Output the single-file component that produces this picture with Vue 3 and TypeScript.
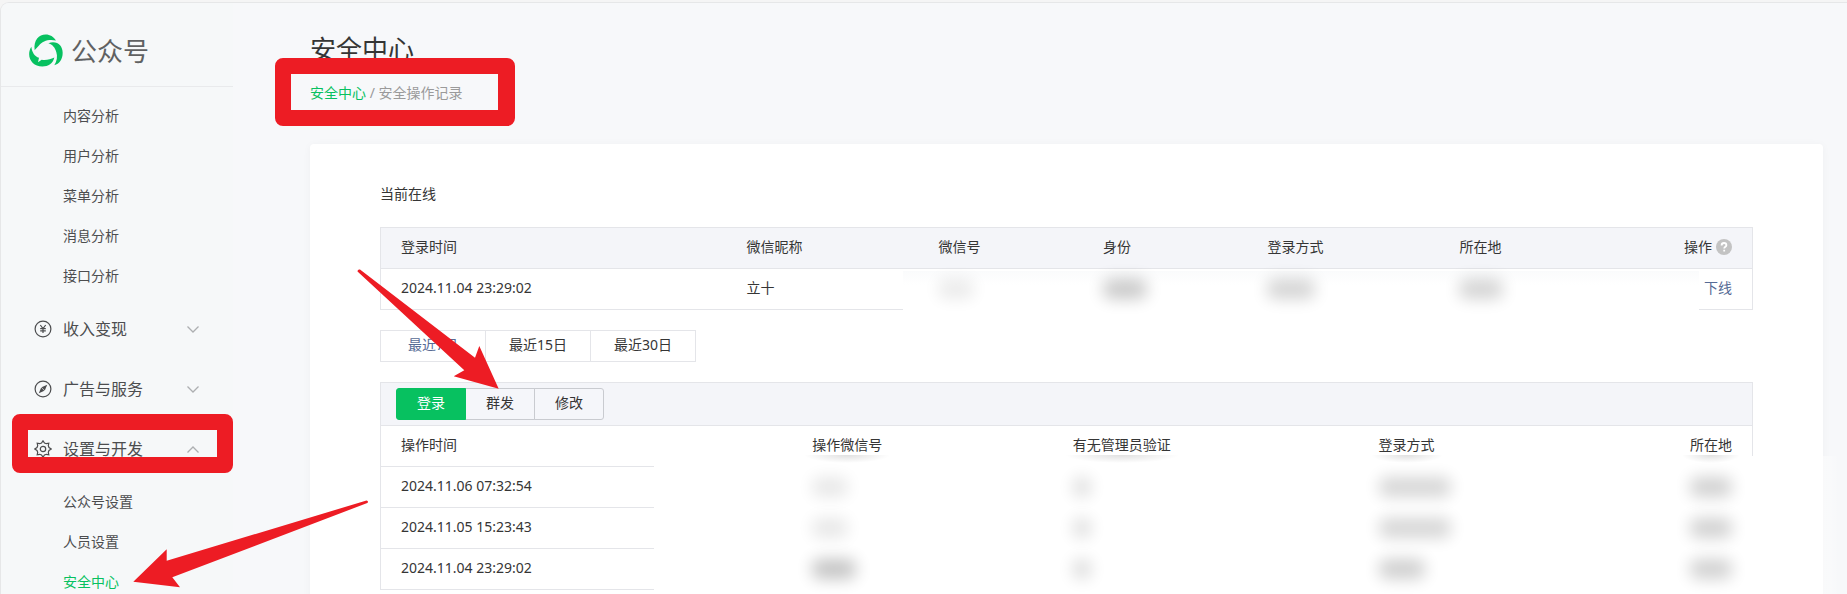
<script setup lang="ts">
interface Smudge { width: number; tone: number }

const analysis: string[] = ['内容分析', '用户分析', '菜单分析', '消息分析', '接口分析']
const settings: string[] = ['公众号设置', '人员设置', '安全中心']
const ranges: string[] = ['最近7日', '最近15日', '最近30日']
const kinds: string[] = ['登录', '群发', '修改']

const onlineMasks: Smudge[] = [
  { width: 36, tone: 0.08 },
  { width: 44, tone: 0.21 },
  { width: 48, tone: 0.17 },
  { width: 44, tone: 0.17 },
]

const records: { time: string; masks: Smudge[] }[] = [
  { time: '2024.11.06 07:32:54', masks: [{ width: 36, tone: 0.09 }, { width: 18, tone: 0.13 }, { width: 72, tone: 0.16 }, { width: 42, tone: 0.18 }] },
  { time: '2024.11.05 15:23:43', masks: [{ width: 36, tone: 0.09 }, { width: 18, tone: 0.13 }, { width: 72, tone: 0.16 }, { width: 42, tone: 0.18 }] },
  { time: '2024.11.04 23:29:02', masks: [{ width: 44, tone: 0.23 }, { width: 18, tone: 0.14 }, { width: 46, tone: 0.19 }, { width: 42, tone: 0.18 }] },
]

const maskStyle = (m: Smudge) => ({ width: `${m.width}px`, opacity: m.tone })
</script>

<template>
  <div class="page">
    <div class="frame">
      <aside class="sidebar">
        <header class="brand">
          <svg class="logo" viewBox="0 0 102 98" aria-hidden="true">
            <path d="M17 48C13 18 30 1 50 1c13 0 24 7 31 18C60 14 40 20 30 34 25 40 21 43 17 48z" />
            <path d="M58 27C84 18 101 34 101 56c0 20-10 34-25 37C84 80 86 66 82 54 78 40 70 30 58 27z" />
            <path d="M7 38C9 55 17 67 30 71L27 84l11-7c14 2 26-1 38-7C72 88 58 97 40 97 8 97-10 66 7 38z" />
          </svg>
          <span class="brand-name">公众号</span>
        </header>
        <nav>
          <ul class="sub">
            <li v-for="item in analysis" :key="item"><a href="#">{{ item }}</a></li>
          </ul>
          <button class="group" type="button" aria-expanded="false">
            <svg class="icon" viewBox="0 0 18 18" aria-hidden="true">
              <circle cx="9" cy="9" r="7.9" />
              <path d="M6.300 5l2.700 3.600L11.700 5M9 8.600V13M6.200 8.700h5.600M6.200 10.800h5.600" />
            </svg>
            <span>收入变现</span>
            <svg class="chevron" viewBox="0 0 12 7" aria-hidden="true"><path d="M.5.500L6 6l5.500-5.500" /></svg>
          </button>
          <button class="group" type="button" aria-expanded="false">
            <svg class="icon" viewBox="0 0 18 18" aria-hidden="true">
              <circle cx="9" cy="9" r="7.900" />
              <path class="solid" d="M13.200 4.800L10.800 10.400 7.600 7.200z" />
              <path class="solid" d="M4.800 13.200l2.400-5.600 3.200 3.200z" />
            </svg>
            <span>广告与服务</span>
            <svg class="chevron" viewBox="0 0 12 7" aria-hidden="true"><path d="M.5.500L6 6l5.500-5.500" /></svg>
          </button>
          <button class="group" type="button" aria-expanded="true">
            <svg class="icon" viewBox="0 0 18 18" aria-hidden="true">
              <circle cx="9" cy="9" r="2.700" />
              <path d="M9 .8l1.500 2.200 1.800.7 2.500-.5-.5 2.500.7 1.800L17.200 9 15 10.500l-.7 1.800.5 2.500-2.500-.5-1.800.7L9 17.200 7.500 15l-1.800-.7-2.500.5.500-2.500-.7-1.800L.8 9 3 7.500l.7-1.800-.5-2.500 2.500.5L7.500 3z" />
            </svg>
            <span>设置与开发</span>
            <svg class="chevron" viewBox="0 0 12 7" aria-hidden="true"><path d="M.5 6.500L6 1l5.500 5.500" /></svg>
          </button>
          <ul class="sub last">
            <li v-for="item in settings" :key="item">
              <a href="#" :class="{ active: item === '安全中心' }">{{ item }}</a>
            </li>
          </ul>
        </nav>
      </aside>

      <main class="main">
        <h1>安全中心</h1>
        <div class="crumbs"><a href="#">安全中心</a> / 安全操作记录</div>

        <section class="card">
          <h2>当前在线</h2>

          <div class="table-wrap">
            <table class="online">
              <colgroup>
                <col class="w-time" /><col class="w-14" /><col class="w-12" /><col class="w-12" /><col class="w-14" /><col class="w-12" /><col />
              </colgroup>
              <thead>
                <tr>
                  <th>登录时间</th><th>微信昵称</th><th>微信号</th><th>身份</th><th>登录方式</th><th>所在地</th>
                  <th class="end">
                    <span class="op">操作
                      <svg class="help" viewBox="0 0 16 16" role="img" aria-label="帮助">
                        <circle cx="8" cy="8" r="8" />
                        <path d="M5.600 6.400C5.600 4.800 6.600 4 8 4s2.400.9 2.400 2.200C10.400 7.700 8.200 7.800 8.200 9.600M8.200 10.800v1.700" />
                      </svg>
                    </span>
                  </th>
                </tr>
              </thead>
              <tbody>
                <tr>
                  <td>2024.11.04 23:29:02</td>
                  <td>立十</td>
                  <td v-for="(m, i) in onlineMasks" :key="i"><span class="smudge" :style="maskStyle(m)"></span></td>
                  <td class="end"><a href="#">下线</a></td>
                </tr>
              </tbody>
            </table>
            <div class="veil veil-online"></div>
          </div>

          <div class="ranges">
            <button v-for="(r, i) in ranges" :key="r" type="button" :class="{ current: i === 0 }">{{ r }}</button>
          </div>

          <div class="table-wrap">
            <div class="toolbar">
              <button v-for="(k, i) in kinds" :key="k" type="button" :class="{ on: i === 0 }">{{ k }}</button>
            </div>
            <table class="records">
              <colgroup>
                <col class="w-30" /><col class="w-19" /><col class="w-22" /><col class="w-14" /><col />
              </colgroup>
              <thead>
                <tr>
                  <th>操作时间</th>
                  <th><span class="smear">操作微信号</span></th>
                  <th><span class="smear">有无管理员验证</span></th>
                  <th><span class="smear">登录方式</span></th>
                  <th class="end"><span class="smear">所在地</span></th>
                </tr>
              </thead>
              <tbody>
                <tr v-for="r in records" :key="r.time">
                  <td>{{ r.time }}</td>
                  <td v-for="(m, i) in r.masks" :key="i" :class="{ end: i === 3 }">
                    <span class="smudge" :style="maskStyle(m)"></span>
                  </td>
                </tr>
              </tbody>
            </table>
            <div class="veil veil-records"></div>
          </div>
        </section>
      </main>
    </div>

    <svg class="marks" width="560" height="590" viewBox="0 0 560 590" aria-hidden="true">
      <path fill-rule="evenodd" d="M283 58H507a8 8 0 0 1 8 8V118a8 8 0 0 1-8 8H283a8 8 0 0 1-8-8V66a8 8 0 0 1 8-8zM291 74V110H498V74z" />
      <path fill-rule="evenodd" d="M20 414H225a8 8 0 0 1 8 8V465a8 8 0 0 1-8 8H20a8 8 0 0 1-8-8V422a8 8 0 0 1 8-8zM28 430V457H217V430z" />
      <path d="M357.500 271.500Q357.500 269 360 269.500L475 357.700 479.300 346 498.700 388.700 453.700 376.300 464.300 370.300z" />
      <path d="M366.500 500.500Q369 501 367.300 503L172.300 577.300 180 587.300 133.300 581.700 166.700 549.300V560.700z" />
    </svg>
  </div>
</template>

<style>
body {
  margin: 0;
}
</style>

<style scoped>
.page {
  position: relative;
  box-sizing: border-box;
  height: 100vh;
  padding-top: 2px;
  overflow: hidden;
  background: #f5f5f5;
  color: #353535;
  font: 14px/20px "Noto Sans", "Noto Sans CJK SC", sans-serif;
}

a {
  color: inherit;
  text-decoration: none;
}

button {
  margin: 0;
  color: inherit;
  font: inherit;
  cursor: pointer;
}

.frame {
  display: flex;
  box-sizing: border-box;
  height: 100%;
  border: 1px solid #e6e7e8;
  border-width: 1px 0 0 1px;
  border-radius: 9px 0 0 0;
  background: #f7f8fa;
}

.sidebar {
  flex: 0 0 232px;
  border-radius: 8px 0 0 0;
  background: #f6f8f9;
}

.brand {
  display: flex;
  align-items: center;
  box-sizing: border-box;
  height: 84px;
  padding: 12px 28px 0;
  gap: 8px;
  border-bottom: 1px solid #e9eaec;
}

.logo {
  width: 34px;
  height: 33px;
  fill: #07c160;
}

.brand-name {
  color: #606162;
  font-size: 26px;
  line-height: 36px;
}

.sub {
  margin: 0;
  padding: 9px 0 4px;
  list-style: none;
}

.sub.last {
  padding-top: 2px;
}

.sub a {
  display: block;
  padding-left: 62px;
  color: #4c4d4f;
  line-height: 40px;
}

.sub a.active {
  color: #07c160;
}

.group {
  display: flex;
  align-items: center;
  width: 100%;
  height: 60px;
  padding: 0 34px 2px 33px;
  gap: 11px;
  border: 0;
  background: none;
  color: #4c4d4f;
  font-size: 16px;
  text-align: left;
}

.icon {
  width: 18px;
  height: 18px;
  fill: none;
  stroke: #4c4d4f;
  stroke-width: 1.2;
}

.icon .solid {
  fill: #4c4d4f;
  stroke: none;
}

.chevron {
  width: 12px;
  height: 7px;
  margin-left: auto;
  overflow: visible;
  fill: none;
  stroke: #adafb1;
  stroke-width: 1.300;
}

.main {
  flex: 1;
  min-width: 0;
  padding: 28px 24px 0 77px;
}

h1 {
  margin: 0;
  font-size: 26px;
  font-weight: 400;
  line-height: 36px;
}

.crumbs {
  margin: 16px 0 41px;
  color: #9a9a9a;
}

.crumbs a {
  color: #07c160;
}

.card {
  padding: 40px 70px;
  border-radius: 4px;
  background: #fff;
  box-shadow: 0 1px 8px rgba(0, 0, 0, 0.04);
}

h2 {
  margin: 0 0 23px;
  font-size: 14px;
  font-weight: 400;
  line-height: 20px;
}

.table-wrap {
  position: relative;
}

table {
  width: 100%;
  border: solid #e4e5e9;
  border-width: 0 1px;
  border-spacing: 0;
  table-layout: fixed;
}

.online {
  border-top-width: 1px;
}

th,
td {
  box-sizing: border-box;
  height: 41px;
  padding: 0 20px 2px;
  border-bottom: 1px solid #e4e5e9;
  font-weight: 400;
  text-align: left;
}

.online th {
  background: #f4f5f9;
}

th.end,
td.end {
  text-align: right;
}

.w-time { width: 25.2%; }
.w-12 { width: 12%; }
.w-14 { width: 14%; }
.w-19 { width: 19%; }
.w-22 { width: 22.3%; }
.w-30 { width: 30%; }

.op {
  display: inline-flex;
  align-items: center;
  gap: 4px;
}

.help {
  width: 16px;
  height: 16px;
  fill: #c3c3c3;
}

.help path {
  fill: none;
  stroke: #fff;
  stroke-width: 1.800;
}

td a {
  color: #576b95;
}

.smudge {
  position: relative;
  z-index: 2;
  display: inline-block;
  height: 20px;
  border-radius: 8px;
  background: #000;
  filter: blur(8px);
  vertical-align: middle;
}

.veil {
  position: absolute;
  z-index: 1;
}

.veil-online {
  top: 44px;
  right: 54px;
  bottom: -16px;
  left: 523px;
  background: linear-gradient(#fafbfc, #fff 14px);
}

.veil-records {
  top: 74px;
  right: -94px;
  bottom: -40px;
  left: 274px;
  background: linear-gradient(to right, #fff calc(100% - 40px), rgba(255, 255, 255, 0) calc(100% - 8px));
}

.smear {
  position: relative;
  display: inline-block;
}

.smear::after {
  position: absolute;
  z-index: 2;
  top: 100%;
  right: -8px;
  left: -8px;
  height: 8px;
  background: radial-gradient(50% 100% at 50% 0, rgba(0, 0, 0, 0.12), rgba(0, 0, 0, 0));
  content: "";
}

.ranges {
  display: flex;
  margin: 20px 0;
}

.ranges button {
  width: 106px;
  height: 32px;
  margin-right: -1px;
  padding: 0 0 2px;
  border: 1px solid #e4e5e9;
  background: #fff;
}

.ranges .current {
  color: #576b95;
}

.toolbar {
  display: flex;
  box-sizing: border-box;
  height: 44px;
  padding: 5px 15px;
  border: 1px solid #e4e5e9;
  background: #f4f5f9;
}

.toolbar button {
  width: 70px;
  height: 32px;
  margin-right: -1px;
  padding: 0 0 2px;
  border: 1px solid #c9cbd0;
  background: #f5f6fa;
}

.toolbar button:last-child {
  border-radius: 0 3px 3px 0;
}

.toolbar .on {
  position: relative;
  border-color: #07c160;
  border-radius: 3px 0 0 3px;
  background: #07c160;
  color: #fff;
}

.marks {
  position: absolute;
  z-index: 5;
  top: 0;
  left: 0;
  fill: #ed1c24;
  pointer-events: none;
}
</style>
